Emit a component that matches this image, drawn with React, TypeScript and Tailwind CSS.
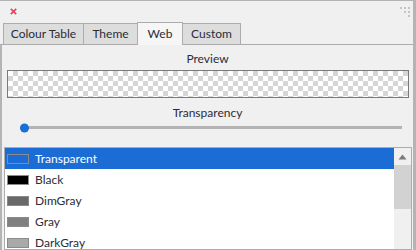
import React from 'react';

const colours = [
  { name: 'Transparent', fill: 'transparent' },
  { name: 'Black', fill: '#000000' },
  { name: 'DimGray', fill: '#696969' },
  { name: 'Gray', fill: '#808080' },
  { name: 'DarkGray', fill: '#a9a9a9' },
];

const tabs = [
  { label: 'Colour Table', w: 'w-[81px]' },
  { label: 'Theme', w: 'w-[55px]' },
  { label: 'Web', w: 'w-[46px]' },
  { label: 'Custom', w: 'w-[59px]' },
];

const Grip = () => (
  <svg width="12" height="12" viewBox="0 0 12 12" className="mt-[1px]">
    {[
      [1, 1], [5, 1], [9, 1],
      [5, 5], [9, 5],
      [9, 9],
    ].map(([x, y], i) => (
      <rect key={i} x={x} y={y} width="2" height="2" fill="#c4c4c4" />
    ))}
  </svg>
);

export default function App() {
  return (
    <div
      className="w-[416px] h-[250px] bg-[#f0f0f0] border-t border-r-[3px] border-[#b4b4b4] overflow-hidden flex flex-col text-[12px] text-[#2c2c38]"
      style={{ fontFamily: 'Lato, "Noto Sans", sans-serif' }}
    >
      {/* title bar */}
      <div className="h-[21px] flex items-center justify-between pl-[10px] pr-[2px] shrink-0">
        <svg width="7" height="7" viewBox="0 0 7 7">
          <path d="M0.8 0.8 L6.2 6.2 M6.2 0.8 L0.8 6.2" stroke="#e8445a" strokeWidth="1.7" />
        </svg>
        <Grip />
      </div>

      {/* tabs */}
      <div className="h-[23px] flex items-end pl-[3px] border-b border-[#acacac] shrink-0">
        {tabs.map((t, i) => {
          const active = t.label === 'Web';
          return (
            <div
              key={t.label}
              className={
                active
                  ? `${t.w} h-[23px] -mb-px -ml-px flex items-center justify-center bg-[#f6f6f6] border border-b-0 border-[#acacac] relative z-10`
                  : `${t.w} h-[21px] ${i === 0 ? '' : '-ml-px'} flex items-center justify-center bg-[#dddddd] border border-b-0 border-[#acacac]`
              }
            >
              {t.label}
            </div>
          );
        })}
      </div>

      {/* panel */}
      <div className="flex-1 border-l-2 border-[#b4b4b4] flex flex-col min-h-0">
        <div className="h-[25px] shrink-0 flex items-end justify-center pb-[2px]">Preview</div>
        <div
          className="ml-[5px] mr-[4px] h-[28px] shrink-0 border border-[#7a7a7a]"
          style={{
            backgroundColor: '#ffffff',
            backgroundImage:
              'linear-gradient(45deg, #d6d6d6 25%, transparent 25%, transparent 75%, #d6d6d6 75%), linear-gradient(45deg, #d6d6d6 25%, transparent 25%, transparent 75%, #d6d6d6 75%)',
            backgroundSize: '10px 10px',
            backgroundPosition: '0 0, 5px 5px',
          }}
        />
        <div className="h-[24px] shrink-0 flex items-end justify-center">Transparency</div>
        <div className="h-[11px] shrink-0 relative ml-[18px] mr-[11px] flex items-center">
          <div className="w-full h-[3px] bg-[#b4b4b4]" />
          <div className="absolute left-0 top-1/2 -translate-y-1/2 w-[9px] h-[9px] rounded-full bg-[#1a6ed8]" />
        </div>

        {/* list */}
        <div className="mt-[14px] ml-[2px] mr-[1px] flex-1 border border-[#adadad] bg-white flex min-h-0">
          <div className="flex-1 flex flex-col">
            {colours.map((c, i) => (
              <div
                key={c.name}
                className={
                  'h-[21px] shrink-0 flex items-center pl-[2px] ' +
                  (i === 0 ? 'bg-[#1c6cd6] text-white' : '')
                }
              >
                <div
                  className="w-[22px] h-[10px] border border-[#8a8a8a]"
                  style={{ backgroundColor: c.fill }}
                />
                <span className="ml-[6px]">{c.name}</span>
              </div>
            ))}
          </div>
          <div className="w-[17px] bg-[#f0f0f0] flex flex-col">
            <div className="h-[17px] flex items-center justify-center">
              <svg width="9" height="6" viewBox="0 0 9 6">
                <path d="M4.5 0.5 L8.5 5.5 L0.5 5.5 Z" fill="#7a7a7a" />
              </svg>
            </div>
            <div className="h-[44px] bg-[#d2d2d2]" />
          </div>
        </div>
      </div>
    </div>
  );
}
